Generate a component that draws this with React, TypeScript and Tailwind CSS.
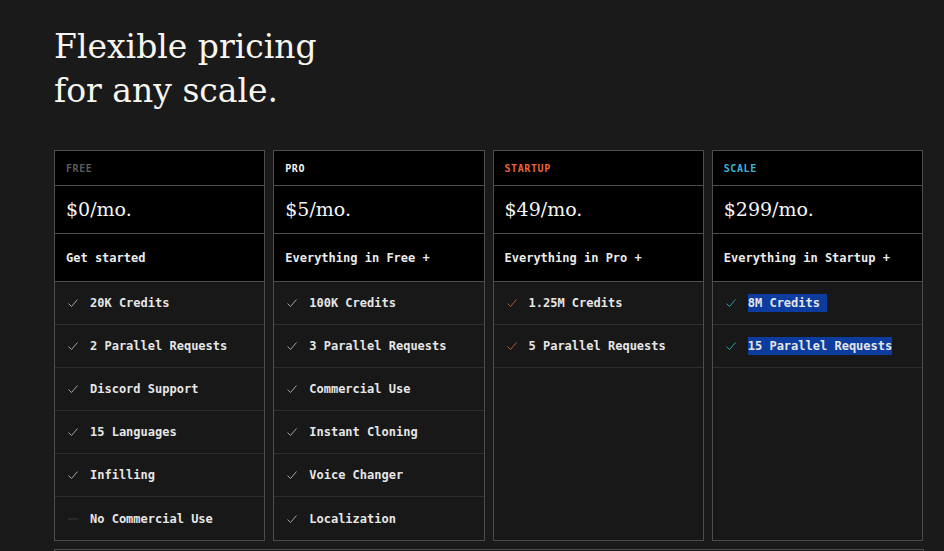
import React from "react";

type Plan = {
  label: string;
  labelClass: string;
  checkClass: string;
  price: string;
  lead: string;
  features: { text: string; off?: boolean }[];
  selected?: boolean;
};

const plans: Plan[] = [
  {
    label: "FREE",
    labelClass: "text-[#5a5a5a]",
    checkClass: "text-[#a3a3a3]",
    price: "$0/mo.",
    lead: "Get started",
    features: [
      { text: "20K Credits" },
      { text: "2 Parallel Requests" },
      { text: "Discord Support" },
      { text: "15 Languages" },
      { text: "Infilling" },
      { text: "No Commercial Use", off: true },
    ],
  },
  {
    label: "PRO",
    labelClass: "text-[#f2f2f2]",
    checkClass: "text-[#a3a3a3]",
    price: "$5/mo.",
    lead: "Everything in Free +",
    features: [
      { text: "100K Credits" },
      { text: "3 Parallel Requests" },
      { text: "Commercial Use" },
      { text: "Instant Cloning" },
      { text: "Voice Changer" },
      { text: "Localization" },
    ],
  },
  {
    label: "STARTUP",
    labelClass: "text-[#e8633a]",
    checkClass: "text-[#b8582c]",
    price: "$49/mo.",
    lead: "Everything in Pro +",
    features: [{ text: "1.25M Credits" }, { text: "5 Parallel Requests" }],
  },
  {
    label: "SCALE",
    labelClass: "text-[#3bb3d6]",
    checkClass: "text-[#2a9fae]",
    price: "$299/mo.",
    lead: "Everything in Startup +",
    features: [{ text: "8M Credits\u00a0" }, { text: "15 Parallel Requests" }],
    selected: true,
  },
];

const mono = "font-['DejaVu_Sans_Mono','Liberation_Mono',monospace]";
const serif = "font-['DejaVu_Serif','Liberation_Serif',serif]";

function Check({ className }: { className: string }) {
  return (
    <svg width="12" height="10" viewBox="0 0 12 10" className={className} fill="none">
      <path d="M1.5 5.5 L4.5 8.5 L10.5 1.5" stroke="currentColor" strokeWidth="1" />
    </svg>
  );
}

function Dash() {
  return (
    <svg width="12" height="10" viewBox="0 0 12 10" className="text-[#3a3a3a]" fill="none">
      <path d="M1 5 L11 5" stroke="currentColor" strokeWidth="1" />
    </svg>
  );
}

function Card({ plan }: { plan: Plan }) {
  return (
    <div className="flex flex-col border border-[#4d4d4d] bg-[#181818]">
      <div className={`h-[35px] flex items-center pl-[11px] bg-black border-b border-[#4d4d4d] text-[10px] font-bold tracking-[0.06em] ${mono} ${plan.labelClass}`}>
        {plan.label}
      </div>
      <div className={`h-[48px] flex items-center pl-[11px] bg-black border-b border-[#4d4d4d] text-[19px] text-[#f5f5f5] ${serif}`}>
        {plan.price}
      </div>
      <div className={`h-[48px] flex items-center pl-[11px] bg-black border-b border-[#4d4d4d] text-[12px] font-bold text-[#ececec] ${mono}`}>
        {plan.lead}
      </div>
      {plan.features.map((f, i) => (
        <div
          key={f.text}
          className={`h-[43px] flex items-center gap-[11px] pl-[12px] ${i === 5 ? "" : "border-b border-[#2e2e2e]"}`}
        >
          {f.off ? <Dash /> : <Check className={plan.checkClass} />}
          <span className={`text-[12px] font-bold text-[#e6e6e6] leading-[18px] ${mono} ${plan.selected ? "bg-[#0c3d9e]" : ""}`}>
            {f.text}
          </span>
        </div>
      ))}
    </div>
  );
}

export default function App() {
  return (
    <main className="w-[944px] h-[551px] overflow-hidden bg-[#1a1a1a] pt-[25px] pl-[54px]">
      <h1 className={`text-[33px] leading-[44px] text-[#f7f5ef] ${serif}`}>
        Flexible pricing
        <br />
        for any scale.
      </h1>
      <div className="mt-[37px] w-[869px] grid grid-cols-4 gap-[8px]">
        {plans.map((p) => (
          <Card key={p.label} plan={p} />
        ))}
      </div>
      <div className="mt-[8px] w-[870px] h-[20px] border-t border-x border-[#4d4d4d]" />
    </main>
  );
}
